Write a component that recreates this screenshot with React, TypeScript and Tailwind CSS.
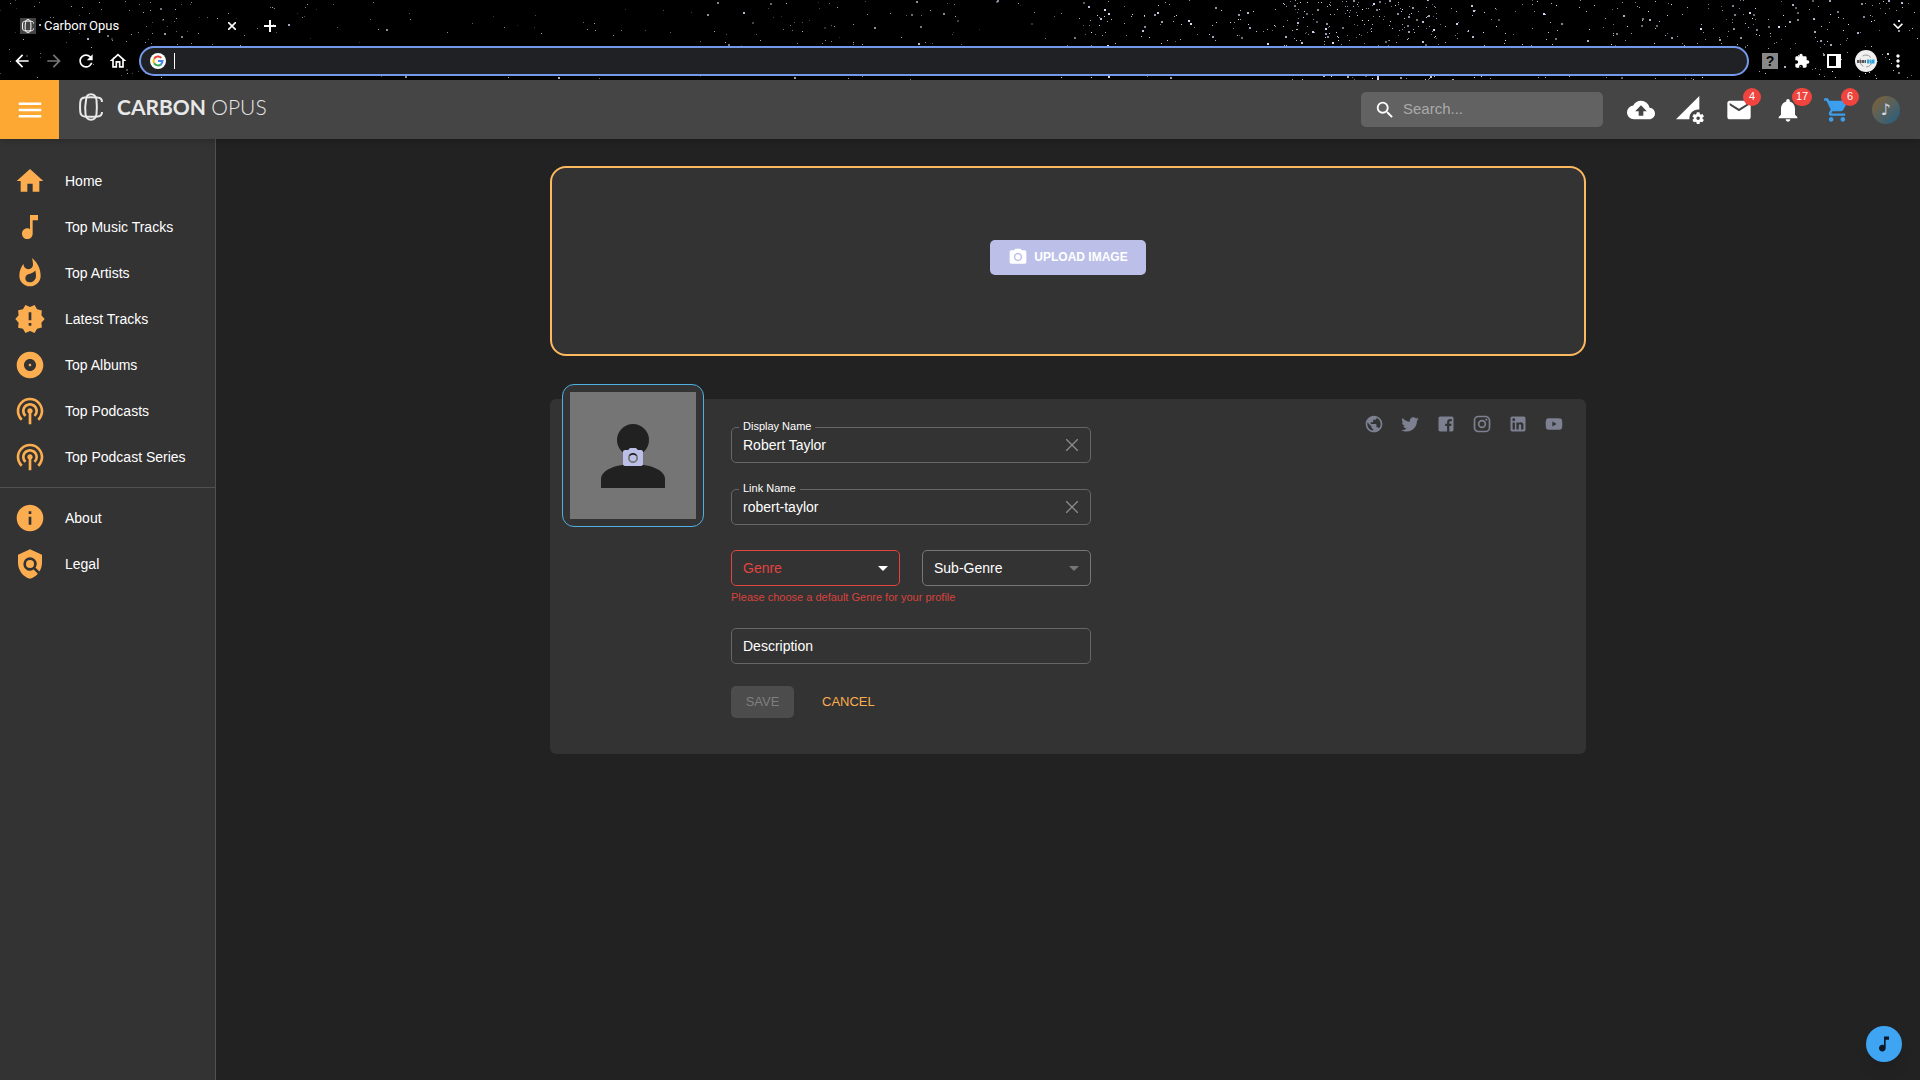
import { useState } from 'react'
import type { ReactNode } from 'react'
import {
  MdAlbum,
  MdArrowBack,
  MdArrowDropDown,
  MdArrowForward,
  MdBackup,
  MdExtension,
  MdHome,
  MdInfo,
  MdKeyboardArrowDown,
  MdMail,
  MdMenu,
  MdMoreVert,
  MdMusicNote,
  MdNewReleases,
  MdNotifications,
  MdOutlineHome,
  MdPermDataSetting,
  MdPhotoCamera,
  MdPodcasts,
  MdPolicy,
  MdPublic,
  MdRefresh,
  MdSearch,
  MdShoppingCart,
  MdWhatshot,
} from 'react-icons/md'

const links = [
  { label: 'Home', icon: MdHome },
  { label: 'Top Music Tracks', icon: MdMusicNote },
  { label: 'Top Artists', icon: MdWhatshot },
  { label: 'Latest Tracks', icon: MdNewReleases },
  { label: 'Top Albums', icon: MdAlbum },
  { label: 'Top Podcasts', icon: MdPodcasts },
  { label: 'Top Podcast Series', icon: MdPodcasts },
]

const infoLinks = [
  { label: 'About', icon: MdInfo },
  { label: 'Legal', icon: MdPolicy },
]

const socials = [
  {
    name: 'Twitter',
    d: 'M22.46 6c-.77.35-1.6.58-2.46.69.88-.53 1.56-1.37 1.88-2.38-.83.5-1.75.85-2.72 1.05C18.37 4.5 17.26 4 16 4c-2.35 0-4.27 1.92-4.27 4.29 0 .34.04.67.11.98C8.28 9.09 5.11 7.38 3 4.79c-.37.63-.58 1.37-.58 2.15 0 1.49.75 2.81 1.91 3.56-.71 0-1.37-.2-1.95-.5v.03c0 2.08 1.48 3.82 3.44 4.21a4.22 4.22 0 0 1-1.93.07 4.28 4.28 0 0 0 4 2.98 8.521 8.521 0 0 1-5.33 1.84c-.34 0-.68-.02-1.02-.06C3.44 20.29 5.7 21 8.12 21 16 21 20.33 14.46 20.33 8.79c0-.19 0-.37-.01-.56.84-.6 1.56-1.36 2.14-2.23z',
  },
  {
    name: 'Facebook',
    d: 'M5 3h14a2 2 0 0 1 2 2v14a2 2 0 0 1-2 2h-3v-6.5h2.3l.4-2.7H16V10c0-.8.4-1.4 1.4-1.4H19V6.2c-.5-.1-1.1-.2-1.8-.2-2.3 0-3.9 1.4-3.9 3.8v2H11v2.7h2.3V21H5a2 2 0 0 1-2-2V5a2 2 0 0 1 2-2z',
  },
  {
    name: 'Instagram',
    d: 'M7.8 2h8.4C19.4 2 22 4.6 22 7.8v8.4a5.8 5.8 0 0 1-5.8 5.8H7.8C4.6 22 2 19.4 2 16.2V7.8A5.8 5.8 0 0 1 7.8 2m-.2 2A3.6 3.6 0 0 0 4 7.6v8.8C4 18.39 5.61 20 7.6 20h8.8a3.6 3.6 0 0 0 3.6-3.6V7.6C20 5.61 18.39 4 16.4 4H7.6m9.65 1.5a1.25 1.25 0 0 1 0 2.5 1.25 1.25 0 0 1 0-2.5M12 7a5 5 0 0 1 0 10 5 5 0 0 1 0-10m0 2a3 3 0 0 0 0 6 3 3 0 0 0 0-6z',
  },
  {
    name: 'LinkedIn',
    d: 'M19 3a2 2 0 0 1 2 2v14a2 2 0 0 1-2 2H5a2 2 0 0 1-2-2V5a2 2 0 0 1 2-2h14m-.5 15.5v-5.3a3.26 3.26 0 0 0-3.26-3.26c-.85 0-1.84.52-2.32 1.3v-1.11h-2.79v8.37h2.79v-4.93c0-.77.62-1.4 1.39-1.4a1.4 1.4 0 0 1 1.4 1.4v4.93h2.79M6.88 8.56a1.68 1.68 0 0 0 1.68-1.68c0-.93-.75-1.69-1.68-1.69a1.69 1.69 0 0 0-1.69 1.69c0 .93.76 1.68 1.69 1.68m1.39 9.94v-8.37H5.5v8.37h2.77z',
  },
  {
    name: 'YouTube',
    d: 'M10 15l5.19-3L10 9v6m11.56-7.83c.13.47.22 1.1.28 1.9.07.8.1 1.49.1 2.09L22 12c0 2.19-.16 3.8-.44 4.83-.25.9-.83 1.48-1.73 1.73-.47.13-1.33.22-2.65.28-1.3.07-2.49.1-3.59.1L12 19c-4.19 0-6.8-.16-7.83-.44-.9-.25-1.48-.83-1.73-1.73-.13-.47-.22-1.1-.28-1.9-.07-.8-.1-1.49-.1-2.09L2 12c0-2.19.16-3.8.44-4.83.25-.9.83-1.48 1.73-1.73.47-.13 1.33-.22 2.65-.28 1.3-.07 2.49-.1 3.59-.1L12 5c4.19 0 6.8.16 7.83.44.9.25 1.48.83 1.73 1.73z',
  },
]

// clusters of the star field: [from, to, count]
const starBands = [
  [0, 200, 100],
  [200, 1060, 160],
  [700, 960, 50],
  [1060, 1280, 160],
  [1280, 1440, 300],
  [1440, 1920, 380],
]

function makeStars() {
  let seed = 7
  const rand = () => {
    seed = (seed * 16807) % 2147483647
    return seed / 2147483647
  }
  return starBands.flatMap(([from, to, count]) =>
    Array.from({ length: count }, () => ({
      x: Math.floor(from + rand() * (to - from)),
      y: Math.floor(rand() * 80),
      size: rand() > 0.82 ? 2 : 1,
      opacity: from < 1060 ? 0.2 + rand() * 0.6 : 0.4 + rand() * 0.6,
    }))
  )
}

const stars = makeStars()

function Stars() {
  return (
    <svg className="absolute inset-0 h-full w-full" aria-hidden="true">
      {stars.map((s, i) => (
        <rect key={i} x={s.x} y={s.y} width={s.size} height={s.size} fill="#dfe3ff" opacity={s.opacity} />
      ))}
    </svg>
  )
}

function LogoMark({ className }: { className: string }) {
  return (
    <svg viewBox="0 0 24 28" className={className} fill="none" stroke="currentColor" strokeWidth="2" aria-hidden="true">
      <path d="M7 7.5C7 3 9 1.2 12 1.2S17 3 17.5 7c.5 5 .5 9 0 14-.5 4-2.5 5.8-5.5 5.8S7 25 6.5 21c-.5-5-.5-9 .5-13.5z" />
      <path d="M23 9c0-3-1.5-4.3-4.5-4.5-4-.4-9-.4-13 0C2.5 4.8 1.3 6.5 1.2 10c-.2 3-.2 5 0 8 .1 3.5 1.3 5.2 4.3 5.5 4 .4 9 .4 13 0 3-.2 4.5-1.5 4.5-4.5" />
    </svg>
  )
}

function GoogleMark() {
  return (
    <svg viewBox="0 0 16 16" className="size-4 shrink-0" aria-hidden="true">
      <circle cx="8" cy="8" r="8" fill="#fff" />
      <g fill="none" strokeWidth="2">
        <path stroke="#ea4335" d="M4.2 5.8A4.5 4.5 0 0 1 11.3 4.9" />
        <path stroke="#fbbc05" d="M4.2 5.7a4.5 4.5 0 0 0 0 4.6" />
        <path stroke="#34a853" d="M4.2 10.2a4.5 4.5 0 0 0 6.7 1.3" />
        <path stroke="#4285f4" d="M10.7 11.6A4.5 4.5 0 0 0 12.5 8.1H8" />
      </g>
    </svg>
  )
}

function ProfileMark() {
  return (
    <svg viewBox="0 0 22 22" className="size-[22px]" aria-hidden="true">
      <circle cx="11" cy="11" r="11" fill="#f0f0f0" />
      <circle cx="11" cy="11" r="6" fill="none" stroke="#9a9a9a" strokeDasharray="9 3" />
      <path stroke="#555" strokeWidth="3" strokeDasharray="2 .5" d="M2 11.5h9" />
      <path stroke="#2aa6de" strokeWidth="4" strokeDasharray="2 .5" d="M12 11.5h8" />
    </svg>
  )
}

function BrowserBar() {
  return (
    <div className="relative bg-black text-white">
      <Stars />
      <div className="relative flex h-11 items-center pl-5 pr-3 pt-2">
        <span className="flex size-4 items-center justify-center bg-[#444]">
          <LogoMark className="size-3.5" />
        </span>
        <span className="ml-2 w-[180px] font-[Roboto,sans-serif] text-[13px]">Carbon Opus</span>
        <button type="button" aria-label="Close tab">
          <svg viewBox="0 0 10 10" className="size-4 p-1 stroke-white stroke-2" aria-hidden="true">
            <path d="M0 0l10 10M10 0L0 10" />
          </svg>
        </button>
        <button type="button" aria-label="New tab" className="ml-6">
          <svg viewBox="0 0 12 12" className="size-3 stroke-white stroke-2" aria-hidden="true">
            <path d="M6 0v12M0 6h12" />
          </svg>
        </button>
        <button type="button" aria-label="Search tabs" className="ml-auto">
          <MdKeyboardArrowDown className="size-5" />
        </button>
      </div>
      <div className="relative flex h-9 items-center pb-0.5 pl-3 pr-1.5">
        <div className="flex gap-3 pr-[11px]">
          <button type="button" aria-label="Back"><MdArrowBack className="size-5" /></button>
          <button type="button" aria-label="Forward" className="text-[#777]"><MdArrowForward className="size-5" /></button>
          <button type="button" aria-label="Reload"><MdRefresh className="size-5" /></button>
          <button type="button" aria-label="Start page"><MdOutlineHome className="size-5" /></button>
        </div>
        <div className="flex h-[30px] flex-1 items-center gap-2 rounded-full border-2 border-[#7499ea] bg-[#202124] px-[9px]">
          <GoogleMark />
          <span className="h-4 w-px bg-white" />
          <input aria-label="Address" className="min-w-0 flex-1 bg-transparent text-sm outline-none" />
        </div>
        <div className="ml-[5px] grid grid-cols-[repeat(5,32px)] place-items-center">
          <span className="flex size-4 items-center justify-center bg-[#888] text-[14px] font-bold text-black">?</span>
          <MdExtension className="size-4" />
          <span className="h-3.5 w-3.5 border-2 border-r-5 border-white bg-black" />
          <ProfileMark />
          <MdMoreVert className="size-5" />
        </div>
      </div>
    </div>
  )
}

function Badged({ label, count, children }: { label: string; count?: number; children: ReactNode }) {
  return (
    <button type="button" aria-label={label} className="relative flex w-[49px] justify-center">
      {children}
      {count && (
        <span className="absolute -top-2 left-[29px] flex h-[18px] min-w-[18px] items-center justify-center rounded-full bg-[#f0443e] px-1 text-[11px] leading-none">
          {count}
        </span>
      )}
    </button>
  )
}

function Header() {
  return (
    <header className="relative z-10 flex h-[59px] items-center bg-[#454545] text-white shadow-md">
      <button type="button" aria-label="Menu" className="flex h-full w-[59px] items-center justify-center bg-[#fca833]">
        <MdMenu className="size-[30px]" />
      </button>
      <a href="#" className="ml-5 flex items-center gap-[14px] pb-1.5 text-[#e8e8e8]">
        <LogoMark className="h-7 w-6" />
        <span className="font-[Lato,sans-serif] text-[21px] leading-7">
          <span className="font-bold">CARBON</span> <span className="font-light">OPUS</span>
        </span>
      </a>
      <label className="ml-auto flex h-[35px] w-[242px] items-center gap-[7px] rounded-[5px] bg-[#626262] px-[13px]">
        <MdSearch className="size-[22px]" />
        <input placeholder="Search..." aria-label="Search" className="min-w-0 flex-1 bg-transparent text-[15px] outline-none placeholder:text-[#aaa]" />
      </label>
      <div className="ml-[13px] mr-2.5 flex items-center">
        <Badged label="Upload"><MdBackup className="size-7" /></Badged>
        <Badged label="Data settings"><MdPermDataSetting className="size-7" /></Badged>
        <Badged label="Messages" count={4}><MdMail className="size-7" /></Badged>
        <Badged label="Notifications" count={17}><MdNotifications className="size-7" /></Badged>
        <Badged label="Cart" count={6}><MdShoppingCart className="size-7 text-[#3c9fee]" /></Badged>
        <Badged label="Account">
          <span className="flex size-7 items-center justify-center rounded-full bg-linear-to-br from-[#80602c] to-[#175c82] font-['DejaVu_Sans',sans-serif] text-base text-[#d5d8e6]">♪</span>
        </Badged>
      </div>
    </header>
  )
}

function NavList({ items }: { items: typeof links }) {
  return (
    <ul>
      {items.map(({ label, icon: Icon }) => (
        <li key={label}>
          <a href="#" className="flex h-[46px] items-center gap-[19px] px-[14px] text-[14px] text-white">
            <Icon className="size-8 shrink-0 text-[#fbad50]" />
            {label}
          </a>
        </li>
      ))}
    </ul>
  )
}

function Sidebar() {
  return (
    <nav className="w-[216px] shrink-0 border-r border-[#505050] bg-[#333] pt-[19px]">
      <NavList items={links} />
      <hr className="my-[7px] border-[#505050]" />
      <NavList items={infoLinks} />
    </nav>
  )
}

function TextField({ id, label, value, onChange }: { id: string; label: string; value: string; onChange: (v: string) => void }) {
  return (
    <div className="relative flex h-9 items-center rounded-[5px] border border-[#666] px-[11px]">
      <label htmlFor={id} className="absolute -top-[10px] left-[7px] bg-[#333] px-1 text-[11px] leading-4">
        {label}
      </label>
      <input id={id} value={value} onChange={(e) => onChange(e.target.value)} className="min-w-0 flex-1 bg-transparent text-[14px] outline-none" />
      <button type="button" aria-label={`Clear ${label}`} onClick={() => onChange('')} className="px-px">
        <svg viewBox="0 0 12 12" className="size-3 stroke-[#8c8c8c]" strokeWidth="1.3" aria-hidden="true">
          <path d="M0 0l12 12M12 0L0 12" />
        </svg>
      </button>
    </div>
  )
}

function ProfileForm() {
  const [name, setName] = useState('Robert Taylor')
  const [link, setLink] = useState('robert-taylor')

  return (
    <form className="w-[360px] pt-7 text-white">
      <TextField id="display-name" label="Display Name" value={name} onChange={setName} />
      <div className="mt-[26px]">
        <TextField id="link-name" label="Link Name" value={link} onChange={setLink} />
      </div>
      <div className="mt-[25px] grid grid-cols-2 gap-[22px]">
        <div className="relative">
          <select aria-label="Genre" className="h-9 w-full appearance-none rounded-[5px] border border-[#e2443f] bg-transparent px-[11px] text-[14px] text-[#e2443f]">
            <option>Genre</option>
          </select>
          <MdArrowDropDown className="pointer-events-none absolute right-[5px] top-1.5 size-6" />
        </div>
        <div className="relative">
          <select aria-label="Sub-Genre" className="h-9 w-full appearance-none rounded-[5px] border border-[#777] bg-transparent px-[11px] text-[14px]">
            <option>Sub-Genre</option>
          </select>
          <MdArrowDropDown className="pointer-events-none absolute right-[5px] top-1.5 size-6 text-[#777]" />
        </div>
      </div>
      <p className="mt-[3px] text-[11px] leading-4 text-[#d9423d]">Please choose a default Genre for your profile</p>
      <input
        aria-label="Description"
        placeholder="Description"
        className="mt-[23px] h-9 w-full rounded-[5px] border border-[#666] bg-transparent px-[11px] text-[14px] outline-none placeholder:text-white"
      />
      <div className="mt-[22px] flex gap-3">
        <button type="button" disabled className="h-8 w-[63px] rounded-[5px] bg-[#4c4c4c] text-[13px] text-[#7f7f7f]">SAVE</button>
        <button type="button" className="h-8 px-4 text-[13px] text-[#fbad50]">CANCEL</button>
      </div>
    </form>
  )
}

function Avatar() {
  return (
    <div className="-mt-[15px] flex h-[143px] w-[142px] shrink-0 rounded-xl border border-[#4fb0e3] bg-[#333] p-[7px]">
      <button type="button" aria-label="Change photo" className="relative flex flex-1 items-center justify-center bg-[#757575]">
        <svg viewBox="0 0 64 64" className="size-16 fill-[#212121]" aria-hidden="true">
          <circle cx="32" cy="16" r="16" />
          <path d="M0 64V55c0-10 18-15 32-15s32 5 32 15v9z" />
        </svg>
        <MdPhotoCamera className="absolute mt-1 size-6 text-[#bcc0e8]" />
      </button>
    </div>
  )
}

function ProfileCard() {
  return (
    <section className="mt-[43px] flex items-start rounded-md bg-[#333] pb-9 pl-3 pr-[22px]">
      <Avatar />
      <div className="ml-[27px]">
        <ProfileForm />
      </div>
      <div className="ml-auto flex gap-4 pt-[15px] text-[#7c8090]">
        <a href="#" aria-label="Website"><MdPublic className="size-5" /></a>
        {socials.map(({ name, d }) => (
          <a key={name} href="#" aria-label={name}>
            <svg viewBox="0 0 24 24" className="size-5 fill-current" aria-hidden="true">
              <path d={d} />
            </svg>
          </a>
        ))}
      </div>
    </section>
  )
}

export default function App() {
  return (
    <div className="flex min-h-screen flex-col bg-[#222] font-['Liberation_Sans',Arial,sans-serif]">
      <BrowserBar />
      <Header />
      <div className="flex flex-1">
        <Sidebar />
        <main className="min-w-0 flex-1 px-6 pt-[27px]">
          <div className="mx-auto max-w-[1036px]">
            <section className="flex h-[190px] items-center justify-center rounded-2xl border-2 border-[#fdb95f] bg-[#333] pb-2">
              <button type="button" className="flex h-[35px] items-center gap-1.5 rounded-[5px] bg-[#bcc0e8] px-[18px] text-[12px] font-bold text-white">
                <MdPhotoCamera className="size-5" />
                UPLOAD IMAGE
              </button>
            </section>
            <ProfileCard />
          </div>
        </main>
      </div>
      <button type="button" aria-label="Player" className="fixed bottom-[18px] right-[18px] flex size-9 items-center justify-center rounded-full bg-[#3fa5f2] text-[#0c1826] shadow-lg">
        <MdMusicNote className="size-5" />
      </button>
    </div>
  )
}
